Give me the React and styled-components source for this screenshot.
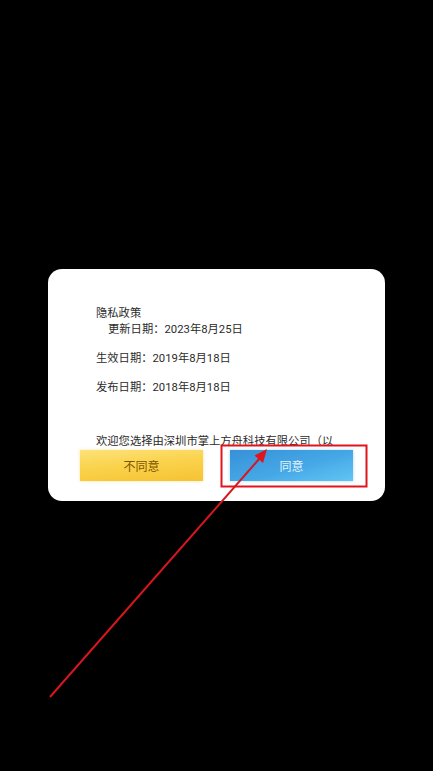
import styled, { createGlobalStyle } from "styled-components";

const GlobalStyle = createGlobalStyle`
  html, body {
    margin: 0;
    padding: 0;
    background: #000;
  }
  body {
    font-family: Roboto, "Noto Sans CJK SC", "Noto Sans", sans-serif;
  }
`;

const Screen = styled.div`
  position: relative;
  width: 433px;
  height: 771px;
  background: #000;
  display: flex;
  align-items: center;
  justify-content: center;
  overflow: hidden;
`;

const Dialog = styled.div`
  width: 337px;
  height: 232px;
  margin-top: -1px;
  background: #fff;
  border-radius: 14px;
  display: flex;
  flex-direction: column;
  overflow: hidden;
`;

const Content = styled.div`
  flex: 0 0 179px;
  overflow: hidden;
  padding: 37px 45px 0 48px;
  box-sizing: border-box;
  color: #2b2b2b;
  font-size: 11.3px;
  line-height: 16px;
`;

const Line = styled.p`
  margin: 0;
  margin-top: ${(p) => p.gap || 0}px;
  padding-left: ${(p) => (p.indent ? 12 : 0)}px;
`;

const Actions = styled.div`
  display: flex;
  justify-content: space-between;
  padding: 2px 32px 0;
`;

const Button = styled.button`
  width: 123px;
  height: 31px;
  border: none;
  padding: 0;
  font-family: inherit;
  font-size: 12px;
  cursor: pointer;
  color: ${(p) => (p.primary ? "#e3f3fc" : "#7c5300")};
  background: ${(p) =>
    p.primary
      ? "linear-gradient(165deg, #3790d8 0%, #45a8e6 55%, #62c5f4 100%)"
      : "linear-gradient(175deg, #fde27a 0%, #fad34c 45%, #f6c233 100%)"};
  box-shadow: 0 0 3px ${(p) => (p.primary ? "rgba(90,180,235,0.5)" : "rgba(240,200,90,0.5)")};
`;

const Marks = styled.svg`
  position: absolute;
  inset: 0;
  pointer-events: none;
`;

export default function App() {
  return (
    <>
      <GlobalStyle />
      <Screen>
        <Dialog>
          <Content>
            <Line>隐私政策</Line>
            <Line indent>更新日期：2023年8月25日</Line>
            <Line gap={13}>生效日期：2019年8月18日</Line>
            <Line gap={13}>发布日期：2018年8月18日</Line>
            <Line gap={38}>
              欢迎您选择由深圳市掌上方舟科技有限公司（以下简称“我们”）提供的产品和服务。
            </Line>
          </Content>
          <Actions>
            <Button>不同意</Button>
            <Button primary>同意</Button>
          </Actions>
        </Dialog>
        <Marks width="433" height="771" viewBox="0 0 433 771">
          <rect x="221.5" y="445.5" width="145" height="41" fill="none" stroke="#e0141c" strokeWidth="2" />
          <line x1="50" y1="697" x2="260" y2="458" stroke="#d8161e" strokeWidth="2" />
          <polygon points="267,449 254.5,455.5 263,463" fill="#e0141c" />
        </Marks>
      </Screen>
    </>
  );
}
